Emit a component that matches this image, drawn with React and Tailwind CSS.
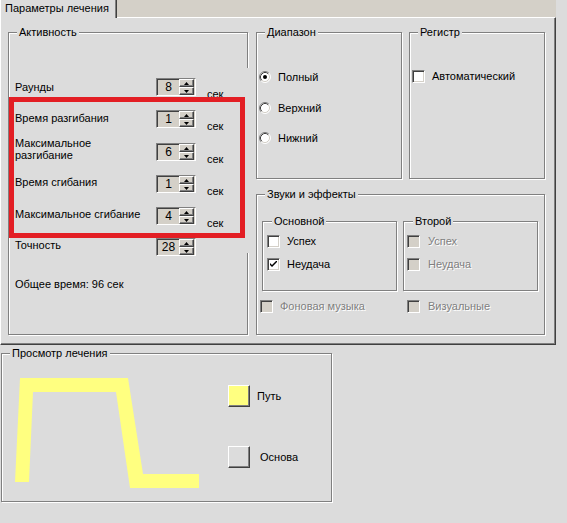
import React from "react";

const DIS = "text-[#808080] [text-shadow:1px_1px_0_#fff]";

function Group({ title, className = "", titleLeft = "left-[8px]", children }) {
  return (
    <div
      className={`relative border border-[#808080] shadow-[inset_1px_1px_0_#fff,1px_1px_0_#fff] ${className}`}
    >
      <span
        className={`absolute top-[-7px] ${titleLeft} px-[2px] bg-[#dcdcdc] leading-[13px] whitespace-nowrap`}
      >
        {title}
      </span>
      {children}
    </div>
  );
}

function Arrow({ up }) {
  return (
    <svg width="5" height="3" viewBox="0 0 5 3" className="block">
      {up ? (
        <polygon points="2.5,0 5,3 0,3" fill="#000" />
      ) : (
        <polygon points="0,0 5,0 2.5,3" fill="#000" />
      )}
    </svg>
  );
}

function SpinBtn({ up }) {
  return (
    <div className="h-[8px] w-[15px] flex items-center justify-center bg-[#d4d0c8] border-t border-l border-t-white border-l-white border-r border-b border-r-[#404040] border-b-[#404040] shadow-[inset_-1px_-1px_0_#808080]">
      <Arrow up={up} />
    </div>
  );
}

function Spin({ value }) {
  return (
    <div className="w-[40px] h-[18px] shrink-0 flex border border-t-[#808080] border-l-[#808080] border-r-white border-b-white bg-[#d4d0c8]">
      <div className="w-[22px] h-full shadow-[inset_1px_1px_0_#404040] flex items-center justify-center text-[12px] leading-[16px] pl-[1px]">
        {value}
      </div>
      <div className="flex flex-col">
        <SpinBtn up />
        <SpinBtn />
      </div>
    </div>
  );
}

function Radio({ checked }) {
  return (
    <svg width="12" height="12" viewBox="0 0 12 12" className="block shrink-0">
      <circle cx="6" cy="6" r="5" fill="#fff" />
      <path d="M9.89 2.11 A5.5 5.5 0 0 0 2.11 9.89" stroke="#808080" fill="none" />
      <path d="M9.89 2.11 A5.5 5.5 0 0 1 2.11 9.89" stroke="#fff" fill="none" />
      <path d="M9.18 2.82 A4.5 4.5 0 0 0 2.82 9.18" stroke="#404040" fill="none" />
      <path d="M9.18 2.82 A4.5 4.5 0 0 1 2.82 9.18" stroke="#d4d0c8" fill="none" />
      {checked && <circle cx="6" cy="6" r="2" fill="#000" />}
    </svg>
  );
}

function Check({ checked, disabled }) {
  return (
    <div
      className={`w-[13px] h-[13px] shrink-0 border border-t-[#808080] border-l-[#808080] border-r-white border-b-white shadow-[inset_1px_1px_0_#404040,inset_-1px_-1px_0_#d4d0c8] flex items-center justify-center ${
        disabled ? "bg-[#d4d0c8]" : "bg-white"
      }`}
    >
      {checked && (
        <svg width="7" height="7" viewBox="0 0 7 7" className="block">
          <path d="M0 2 L0 4 L2 6 L7 1 L7 -1 L2 4 Z" fill="#000" />
        </svg>
      )}
    </div>
  );
}

function Row({ label, value, sec = true, shift = "", two = false, className = "" }) {
  return (
    <div className={`flex h-[18px] items-center ${className}`}>
      <div
        className={`w-[141px] shrink-0 whitespace-nowrap ${two ? "leading-[12px]" : "leading-[13px]"} ${shift}`}
      >
        {label}
      </div>
      <Spin value={value} />
      {sec && <div className="ml-[11px] self-start mt-[10px] leading-[13px]">сек</div>}
    </div>
  );
}

export default function App() {
  return (
    <div className="w-[567px] h-[523px] overflow-hidden bg-[#dcdcdc] text-black text-[11px] font-['Liberation_Sans',Arial,sans-serif]">
      {/* tab strip */}
      <div className="w-[556px] h-[17px] bg-[#d4d0c8] flex">
        <div className="relative z-10 w-[117px] h-[18px] bg-[#dcdcdc] border-l border-white border-r border-r-[#404040] shadow-[inset_-1px_0_0_#808080] pl-[4px] pt-[2px] leading-[13px] whitespace-nowrap">
          Параметры лечения
        </div>
      </div>

      {/* panel */}
      <div className="w-[556px] h-[328px] border-l border-t border-white border-r border-b border-r-[#404040] border-b-[#404040] shadow-[inset_-1px_-1px_0_#808080] pl-[7px] pt-[14px] flex gap-[8px]">
        {/* Активность */}
        <Group title="Активность" className="w-[240px] h-[303px] shrink-0">
          <div className="pl-[6px] pt-[45px]">
            <Row label="Раунды" value="8" />
            <Row label="Время разгибания" value="1" shift="-mt-[2px]" className="mt-[14px]" />
            <Row
              label={
                <>
                  Максимальное
                  <br />
                  разгибание
                </>
              }
              value="6"
              two
              shift="-mt-[6px]"
              className="mt-[15px]"
            />
            <Row label="Время сгибания" value="1" shift="-mt-[3px]" className="mt-[14px]" />
            <Row label="Максимальное сгибание" value="4" shift="-mt-[4px]" className="mt-[14px]" />
            <Row label="Точность" value="28" sec={false} shift="-mt-[3px]" className="mt-[13px]" />
            <div className="mt-[22px] leading-[13px]">Общее время: 96 сек</div>
          </div>
          {/* border hidden behind labels */}
          <div className="absolute right-[-2px] top-[35px] w-[3px] h-[185px] bg-[#dcdcdc]" />
          {/* red highlight */}
          <div className="absolute left-0 top-[64px] w-[236px] h-[141px] border-[5px] border-[#e31e24]" />
        </Group>

        {/* right column */}
        <div className="flex flex-col w-[289px]">
          <div className="flex gap-[7px]">
            <Group title="Диапазон" className="w-[146px] h-[147px]">
              <div className="pl-[2px] pt-[38px]">
                <div className="flex items-center h-[12px]">
                  <Radio checked />
                  <span className="ml-[7px] leading-[13px]">Полный</span>
                </div>
                <div className="flex items-center h-[12px] mt-[19px]">
                  <Radio />
                  <span className="ml-[7px] leading-[13px]">Верхний</span>
                </div>
                <div className="flex items-center h-[12px] mt-[18px]">
                  <Radio />
                  <span className="ml-[7px] leading-[13px]">Нижний</span>
                </div>
              </div>
            </Group>
            <Group title="Регистр" className="w-[136px] h-[147px]">
              <div className="pl-[2px] pt-[37px]">
                <div className="flex items-center h-[13px]">
                  <Check />
                  <span className="ml-[7px] leading-[13px]">Автоматический</span>
                </div>
              </div>
            </Group>
          </div>

          <Group title="Звуки и эффекты" className="w-[289px] h-[141px] mt-[15px]">
            <div className="flex gap-[6px] ml-[5px] mt-[26px]">
              <Group title="Основной" titleLeft="left-[9px]" className="w-[135px] h-[70px]">
                <div className="pl-[4px] pt-[13px]">
                  <div className="flex items-center h-[13px]">
                    <Check />
                    <span className="ml-[7px] leading-[13px]">Успех</span>
                  </div>
                  <div className="flex items-center h-[13px] mt-[10px]">
                    <Check checked />
                    <span className="ml-[7px] leading-[13px]">Неудача</span>
                  </div>
                </div>
              </Group>
              <Group title="Второй" titleLeft="left-[9px]" className="w-[135px] h-[70px]">
                <div className="pl-[3px] pt-[13px]">
                  <div className="flex items-center h-[13px]">
                    <Check disabled />
                    <span className={`ml-[8px] leading-[13px] ${DIS}`}>Успех</span>
                  </div>
                  <div className="flex items-center h-[13px] mt-[10px]">
                    <Check disabled />
                    <span className={`ml-[8px] leading-[13px] ${DIS}`}>Неудача</span>
                  </div>
                </div>
              </Group>
            </div>
            <div className="flex ml-[3px] mt-[9px]">
              <div className="w-[147px] flex items-center h-[13px]">
                <Check disabled />
                <span className={`ml-[7px] leading-[13px] ${DIS}`}>Фоновая музыка</span>
              </div>
              <div className="flex items-center h-[13px]">
                <Check disabled />
                <span className={`ml-[8px] leading-[13px] ${DIS}`}>Визуальные</span>
              </div>
            </div>
          </Group>
        </div>
      </div>

      {/* Просмотр лечения */}
      <Group title="Просмотр лечения" className="w-[331px] h-[149px] ml-[1px] mt-[8px]">
        <div className="flex">
          <svg width="226" height="140" viewBox="2 354 226 140" className="block shrink-0">
            <polygon
              points="15,482 20,378 128,378 143,474 199,474 199,488 130,488 116,392 33,392 29,482"
              fill="#ffff80"
            />
          </svg>
          <div className="flex flex-col">
            <div className="flex items-center mt-[31px]">
              <div className="w-[22px] h-[22px] bg-[#ffff80] border-t border-l border-white border-r border-b border-r-[#404040] border-b-[#404040] shadow-[inset_-1px_-1px_0_#808080]" />
              <span className="ml-[7px] leading-[13px]">Путь</span>
            </div>
            <div className="flex items-center mt-[39px]">
              <div className="w-[22px] h-[22px] bg-[#dcdcdc] border-t border-l border-white border-r border-b border-r-[#404040] border-b-[#404040] shadow-[inset_-1px_-1px_0_#808080]" />
              <span className="ml-[10px] leading-[13px]">Основа</span>
            </div>
          </div>
        </div>
      </Group>
    </div>
  );
}
